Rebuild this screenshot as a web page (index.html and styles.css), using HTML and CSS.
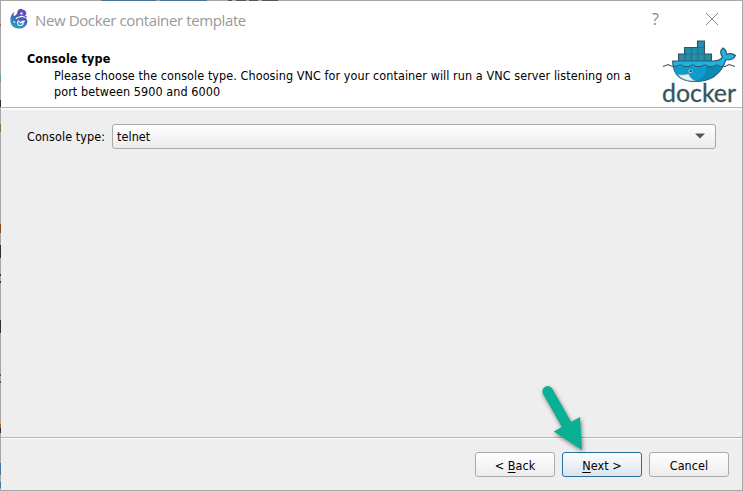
FILE: index.html
```html
<!DOCTYPE html>
<html lang="en">
<head>
<meta charset="utf-8">
<title>New Docker container template</title>
<link rel="stylesheet" href="styles.css">
</head>
<body>
<div class="window">
  <header class="header">
    <div class="titlebar">
      <svg class="app-icon" width="20" height="22" viewBox="0 0 20 22">
        <defs><linearGradient id="cham" x1=".7" y1="0" x2=".25" y2="1"><stop offset="0" stop-color="#753fb2"/><stop offset=".45" stop-color="#4264b8"/><stop offset="1" stop-color="#20a5c9"/></linearGradient></defs>
        <path fill="url(#cham)" d="M8.500 3.500C9 1 12 .2 13.500 1.400C16 1.500 17.500 4 17.300 6L16 7.500L18 8.500L17 10L18.500 13C18.500 17 15 20.600 10.500 20.600C4.500 20.600 1.300 17 1.300 12C1.300 8.500 2.800 5.500 5.500 3.700C4.500 5.500 4.300 7 5 8C7 7.500 8 6 8.500 3.500Z"/>
        <path fill="none" stroke="#fff" stroke-width="1.100" d="M7 11C8 8.500 11 9.500 13 8.300L16.500 9.500M10 12.500C7.500 14 8.500 17.500 11 17.500C13.500 17.500 14.500 16 14 14.500"/>
        <path d="M9.500 12.500L11.500 14L13.500 12.500L16.500 13L14 15L11 15.500Z" fill="#fff"/>
        <circle cx="12.500" cy="5.500" r="1.300" fill="#d8d8f2"/>
        <path d="M4.500 13.500l1.500 1" stroke="#fff" stroke-width="1.200"/>
      </svg>
      <span class="title">New Docker container template</span>
      <span class="help">?</span>
      <svg class="close" width="14" height="14" viewBox="0 0 14 14"><path d="M1 1L13 13M13 1L1 13" stroke="#858585" fill="none"/></svg>
    </div>
    <div class="banner">
      <div class="intro">
        <h1><span>Console type</span></h1>
        <p><span class="line1">Please choose the console type. Choosing VNC for your container will run a VNC server listening on a</span><br><span class="line2">port between 5900 and 6000</span></p>
      </div>
      <svg class="docker" width="82" height="71" viewBox="0 0 82 71">
        <path d="M20.500 24.500V18H26.500V11.500H39.500V5H46.500V18H53.500V25.500H20.500Z" fill="#1f8ca8" stroke="#36545f" stroke-width="1.100"/>
        <path d="M27 18H47M33.500 12V25M40 12V25M46.500 18V25M27 18V25M40 11.500H46" stroke="#2f7186" fill="none"/>
        <path d="M23.500 20V24M30 14V17M30 20V24M36.500 14V17M36.500 20V24M43 7V10M43 14V17M43 20V24M50 20V24" stroke="#38a3bd" fill="none" opacity=".6"/>
        <path d="M14.700 25H55C60 25 63.500 23.500 64.500 20.500C62 18 62 14.500 65 12C67.500 13.500 68.700 16 68.700 18.500C72 17 75 17.500 77.500 19.500C76 22.500 72.500 24.500 68 23.500C64.500 34 56 45.500 37 45.500C23 45.500 14.700 39 14.700 25Z" fill="#20b2e4" stroke="#365966" stroke-width="1.200"/>
        <path d="M15.300 30.500H64C59 39 51 44.900 37 44.900C23 44.900 16 40 15.300 30.500Z" fill="#0c9ccb"/>
        <path d="M48 30.500H64C59 39 51 44.900 39 44.900C46 41 49 36 48 30.500Z" fill="#078bb9"/>
        <path d="M19.500 38.200C25 39.500 29 38 31 38C31.500 41 34 43.500 38 45C29 45.500 23 43 19.500 38.200Z" fill="#e6f0f2" stroke="#5d8690" stroke-width=".5"/>
        <path d="M5 30.500L10 28.500L13 30L18 30.500L23 28.800L26 30.500H31L35 28.800L38 30.500H43L47 28.800L50 30.500H55L59 28.800L62 30.500H67L71 28.500L77 30.500" fill="none" stroke="#365966" stroke-width="1.100"/>
        <circle cx="32.500" cy="35.300" r="1.900" fill="#c8e6ed"/><circle cx="32.700" cy="35.300" r="1.200" fill="#234959"/>
        <text x="4" y="65.800" textLength="74" lengthAdjust="spacingAndGlyphs">docker</text>
      </svg>
    </div>
  </header>
  <main class="content">
    <label><span class="label-text">Console type:</span></label>
    <div class="combo"><span class="value">telnet</span><svg width="10" height="6" viewBox="0 0 10 6"><path d="M0 .5H10L5 5.500Z" fill="#555"/></svg></div>
  </main>
  <footer class="footer">
    <button><span>&lt; <u>B</u>ack</span></button>
    <button class="primary"><span><u>N</u>ext &gt;</span></button>
    <button><span>Cancel</span></button>
  </footer>
</div>
<svg class="arrow" width="60" height="80" viewBox="0 0 60 80"><path d="M13.700 16.300L33.500 51.200" stroke="#0ab092" stroke-width="10.600" stroke-linecap="round"/><path d="M19.700 56.500L46 42L48 75Z" fill="#0ab092"/></svg>
<i class="edge edge-left"></i>
<i class="edge edge-top"></i>
</body>
</html>
```

FILE: styles.css
```css
* { box-sizing: border-box; }
body { margin: 0; width: 743px; height: 491px; overflow: hidden; font: 12.5px/16px "DejaVu Sans Condensed", "DejaVu Sans", sans-serif; font-stretch: condensed; letter-spacing: .07px; color: #000; }
.window { display: flex; flex-direction: column; width: 743px; height: 491px; border: 1px solid #a7a7a7; background: #eee; }
.header { height: 107px; background: #fff; border-bottom: 1px solid #b3b3b3; }
.titlebar { display: flex; align-items: center; height: 36px; padding: 0 23px 0 8px; }
.app-icon { flex: none; }
.title { margin-left: 6px; padding-top: 1px; font: 15px/20px "Open Sans", sans-serif; letter-spacing: -.38px; color: #999; white-space: nowrap; }
.help { margin-left: auto; margin-right: 46px; font: 16px/20px "Open Sans", sans-serif; color: #858585; }
.banner { display: flex; }
.intro { width: 657px; padding: 14px 0 0 26px; white-space: nowrap; }
h1 { margin: 0; font: bold 12.5px/16px "DejaVu Sans Condensed", "DejaVu Sans", sans-serif; font-stretch: condensed; letter-spacing: .1px; }
p { margin: 1px 0 0 27px; }
.docker { flex: none; margin-top: -1px; overflow: visible; }
.docker text { font: 25px/1 Lato, sans-serif; letter-spacing: 0; fill: #365560; stroke: #365560; stroke-width: .3px; }
.content { display: flex; align-items: flex-start; flex: 1; padding: 14px 26px 0; border-top: 2px solid #fbfbfb; }
label { width: 85px; padding-top: 5px; white-space: nowrap; }
.combo { display: flex; align-items: center; justify-content: space-between; width: 604px; height: 25px; padding: 0 10px 0 4px; border: 1px solid #a9a9a9; border-radius: 3px; background: linear-gradient(#fff, #ebebeb); }
.combo svg { margin-top: -1px; }
.footer { display: flex; justify-content: flex-end; gap: 7px; height: 53px; padding: 14px 13px 0 0; border-top: 1px solid #b3b3b3; box-shadow: inset 0 1px #fff; }
button { width: 80px; height: 25px; padding: 2px 0 0; border: 1px solid #aaa; border-radius: 3px; background: linear-gradient(#fff, #ececec); font: inherit; letter-spacing: inherit; color: #000; }
.primary { border-color: #286f9d; background: linear-gradient(#fcfdfe, #dbe4ec); }
u { text-underline-offset: 2px; text-decoration-skip-ink: none; }
.arrow { position: absolute; left: 534px; top: 375px; filter: drop-shadow(1px 2px 2px #0007); }
/* Desktop showing through the one-pixel window frame */
.edge { position: absolute; left: 0; top: 0; }
.edge-left { width: 1px; height: 491px; background: linear-gradient(#0000 24px, #a8682f 24px 26px, #0000 26px 75px, #62a0a0 75px 82px, #0000 82px 100px, #333 100px 107px, #0000 107px 124px, #8b7045 124px 132px, #0000 132px 224px, #8a4a28 224px 233px, #0000 233px 245px, #303030 245px 258px, #0000 258px 274px, #333 274px 276px, #0000 276px 281px, #333 281px 283px, #0000 283px 320px, #303030 320px 333px, #0000 333px 374px, #6b5030 374px 376px, #0000 376px 381px, #6b5030 381px 383px, #0000 383px 424px, #a56a20 424px 428px, #2a2a40 428px 433px, #0000 433px 463px, #4878a0 463px 475px, #0000 475px 482px, #4878a0 482px 488px, #0000 488px); }
.edge-top { width: 743px; height: 1px; background: linear-gradient(90deg, #0000 101px, #4a7596 101px 156px, #999 156px 160px, #4a7596 160px 207px, #0000 207px 228px, #555 228px 232px, #aaa 232px 236px, #555 236px 246px, #aaa 246px 249px, #555 249px 258px, #aaa 258px 262px, #555 262px 278px, #0000 278px); }
```
